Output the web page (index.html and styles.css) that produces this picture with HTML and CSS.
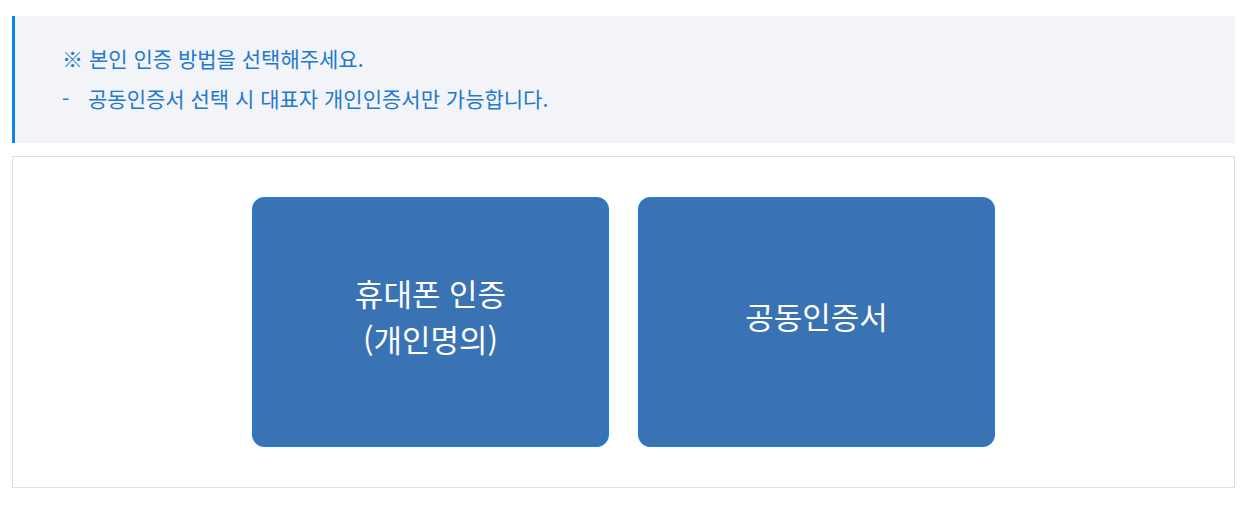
FILE: index.html
```html
<!DOCTYPE html>
<html lang="ko">
<head>
    <meta charset="UTF-8">
    <meta name="viewport" content="width=device-width, initial-scale=1.0">
    <title>본인 인증</title>

    <link rel="stylesheet" href="styles.css">
</head>

<body>
    <div class="auth">
        <div class="auth-notice">
            <p>※ 본인 인증 방법을 선택해주세요.</p>
            <p class="sub"><span class="dash">-</span>공동인증서 선택 시 대표자 개인인증서만 가능합니다.</p>
        </div>

        <div class="auth-select">
            <a class="auth-btn" href="javascript:;">휴대폰 인증<br>(개인명의)</a>
            <a class="auth-btn" href="javascript:;">공동인증서</a>
        </div>
    </div>
</body>
</html>
```

FILE: styles.css
```css
* {
  margin: 0;
  padding: 0;
  box-sizing: border-box;
}

body {
  font-family: "Noto Sans CJK KR", "Noto Sans", sans-serif;
  background: #fff;
}

.auth {
  padding: 16px 16px 0 12px;
}

.auth-notice {
  background: #f3f4f8;
  border-left: 3px solid #0a87e4;
  padding: 22px 20px 25px 47px;
  color: #1f79cf;
  font-size: 21px;
  line-height: 40px;
}

.auth-notice .dash {
  display: inline-block;
  width: 26px;
}

.auth-select {
  margin-top: 13px;
  border: 1px solid #e0e0e0;
  padding: 40px 0;
  display: flex;
  justify-content: center;
  gap: 29px;
}

.auth-btn {
  width: 357px;
  height: 250px;
  padding-bottom: 12px;
  display: flex;
  align-items: center;
  justify-content: center;
  text-align: center;
  background: #3973b3;
  border: 1px solid #1b7fea;
  border-radius: 12px;
  color: #fff;
  font-size: 31px;
  line-height: 46px;
  text-decoration: none;
}
```
